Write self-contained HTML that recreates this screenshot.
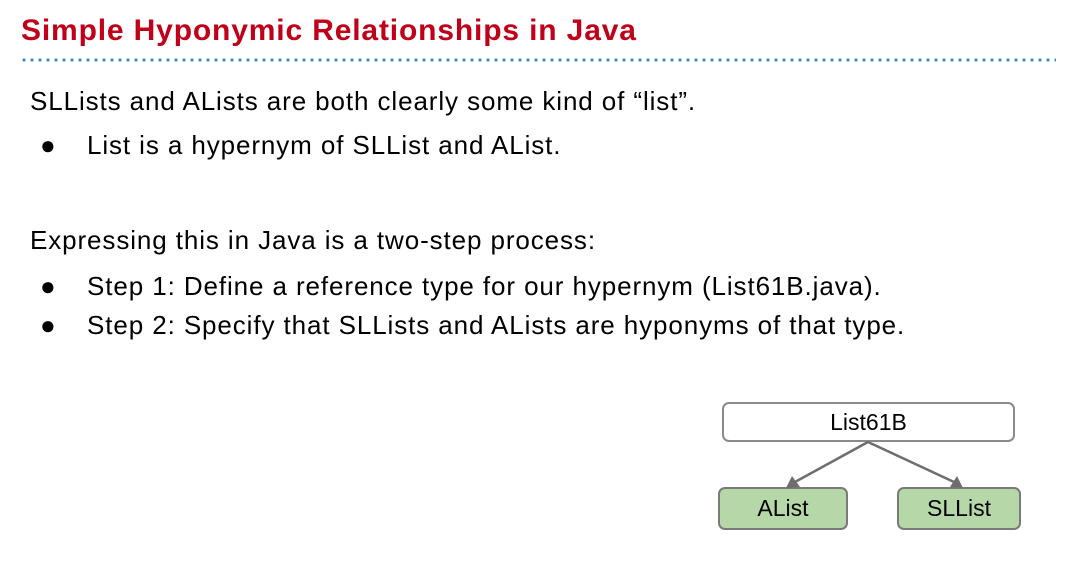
<!DOCTYPE html>
<html><head><meta charset="utf-8"><style>
body{margin:0;width:1090px;height:565px;background:#fff;position:relative;overflow:hidden;font-family:"Liberation Sans",sans-serif;color:#000}
.t{position:absolute;white-space:nowrap;line-height:1}
.title{left:21px;top:16px;font-size:30px;font-weight:bold;color:#c00018;letter-spacing:0.85px}
.b{font-size:26px;letter-spacing:0.9px}
.dot{position:absolute;left:20px;top:58px;width:1036px;height:4px;background-image:radial-gradient(circle,#3d85c6 1.4px,transparent 1.8px);background-size:8px 4px}
.box{position:absolute;border:2px solid #8a8a8a;border-radius:7px;box-sizing:border-box;display:flex;align-items:center;justify-content:center;font-size:23px}
.g{background:#b6d7a8;border-color:#7a7a7a}
</style></head><body>
<div class="t title">Simple Hyponymic Relationships in Java</div>
<div class="dot"></div>
<div class="t b" style="left:30px;top:88px">SLLists and ALists are both clearly some kind of “list”.</div>
<div class="t b" style="left:40px;top:132px">●</div>
<div class="t b" style="left:87px;top:132px">List is a hypernym of SLList and AList.</div>
<div class="t b" style="left:30px;top:227px">Expressing this in Java is a two-step process:</div>
<div class="t b" style="left:40px;top:273px">●</div>
<div class="t b" style="left:87px;top:273px">Step 1: Define a reference type for our hypernym (List61B.java).</div>
<div class="t b" style="left:40px;top:312px">●</div>
<div class="t b" style="left:87px;top:312px">Step 2: Specify that SLLists and ALists are hyponyms of that type.</div>
<div class="box" style="left:722px;top:402px;width:293px;height:40px">List61B</div>
<div class="box g" style="left:718px;top:487px;width:130px;height:43px">AList</div>
<div class="box g" style="left:897px;top:487px;width:124px;height:43px">SLList</div>
<svg style="position:absolute;left:0;top:0" width="1090" height="565">
<g stroke="#6e6e6e" stroke-width="2.5" fill="#6e6e6e">
<line x1="868" y1="442" x2="795" y2="482"/>
<line x1="868" y1="442" x2="954" y2="482"/>
<polygon points="786,488 792,476 800,487" stroke="none"/>
<polygon points="963,488 950,487 957,476" stroke="none"/>
</g></svg>
</body></html>
